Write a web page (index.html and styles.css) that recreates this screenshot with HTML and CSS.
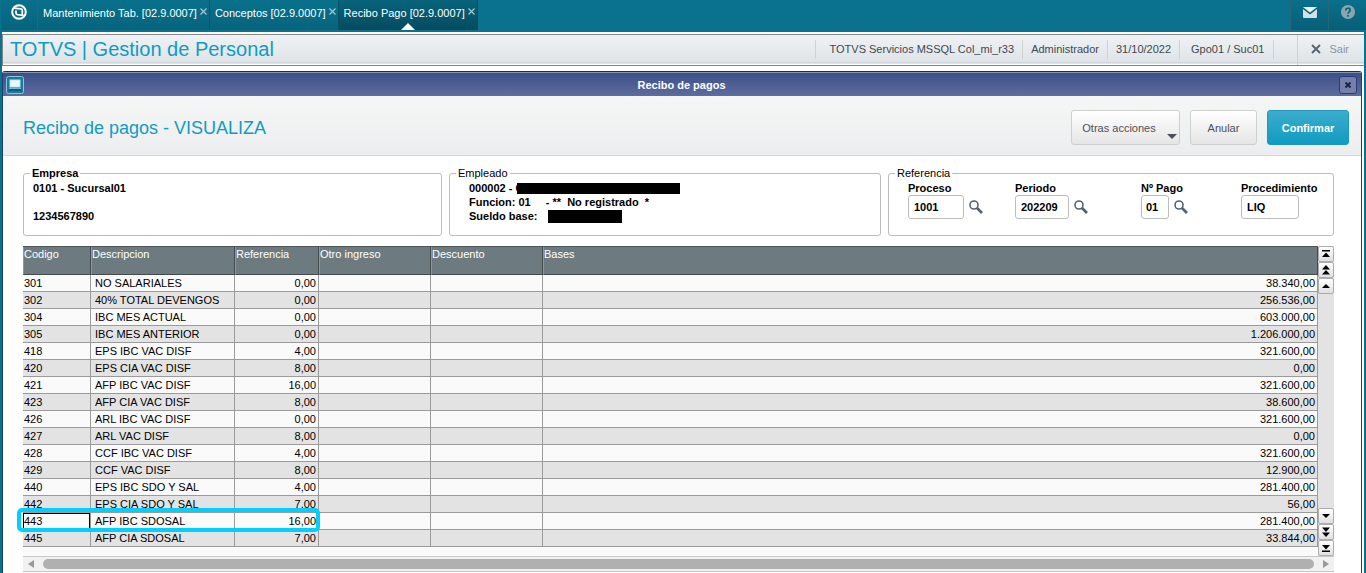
FILE: index.html
```html
<!DOCTYPE html>
<html lang="es">
<head>
<meta charset="utf-8">
<title>Recibo de pagos</title>
<link rel="stylesheet" href="styles.css">
</head>
<body>
<nav class="topbar">
  <button class="brand" aria-label="Inicio"><svg width="16" height="16" viewBox="0 0 16 16"><circle cx="8" cy="8" r="6.8" fill="none" stroke="#fff" stroke-width="2"/><path d="M3 4.200L9.800 4.800Q11.300 5 11.300 6.600V11.500" fill="none" stroke="#fff" stroke-width="1.800"/><path d="M5 6.500V9Q5 10.500 6.500 10.700L12.500 11.300" fill="none" stroke="#fff" stroke-width="1.800"/></svg></button>
  <div class="tab"><a href="#">Mantenimiento Tab. [02.9.0007]</a><button class="tab-close" aria-label="Cerrar Mantenimiento"><svg width="7" height="7" viewBox="0 0 7 7"><path d="M.5.5l6 6M6.500.500l-6 6"/></svg></button></div>
  <div class="tab"><a href="#">Conceptos [02.9.0007]</a><button class="tab-close" aria-label="Cerrar Conceptos"><svg width="7" height="7" viewBox="0 0 7 7"><path d="M.5.5l6 6M6.500.500l-6 6"/></svg></button></div>
  <div class="tab active"><a href="#">Recibo Pago [02.9.0007]</a><button class="tab-close" aria-label="Cerrar Recibo Pago"><svg width="7" height="7" viewBox="0 0 7 7"><path d="M.5.5l6 6M6.500.500l-6 6"/></svg></button></div>
  <div class="tools">
    <button class="tool" aria-label="Mensajes"><svg width="14" height="11" viewBox="0 0 14 11"><rect width="14" height="11" rx="1" fill="#d5e0e4"/><path d="M0 1l7 5.500L14 1" fill="none" stroke="#0a6078" stroke-width="1.500"/><path d="M1 0h12L7 4.800z" fill="#eef4f5"/></svg></button>
    <button class="tool" aria-label="Ayuda"><svg width="14" height="14" viewBox="0 0 14 14"><circle cx="7" cy="7" r="7" fill="#8ba5b0"/><path d="M4.800 5.500C4.800 2.500 9.300 2.500 9.200 5.300C9.200 6.800 7 6.900 7 8.800M7 10v1.700" fill="none" stroke="#07627a" stroke-width="1.700"/></svg></button>
  </div>
</nav>
<div class="page">
  <header class="infobar">
    <h1>TOTVS | Gestion de Personal</h1>
    <ul class="info">
      <li class="env">TOTVS Servicios MSSQL Col_mi_r33</li><li>Administrador</li><li>31/10/2022</li><li class="branch">Gpo01 / Suc01</li>
    </ul>
    <button class="exit"><svg width="10" height="10" viewBox="0 0 10 10"><path d="M1 1l8 8M9 1l-8 8" stroke="#596571" stroke-width="2"/></svg>Sair</button>
  </header>
  <main class="window">
    <div class="titlebar">
      <svg class="winicon" width="18" height="18" viewBox="0 0 18 18"><rect x=".5" y=".5" width="17" height="17" rx="2" fill="#137f9f" stroke="#8fc4d8"/><rect x="4" y="4" width="10" height="7" fill="#eef6f8" stroke="#bfe0ea"/><path d="M3 13h12l1 2H2z" fill="#0b5f7c"/><path d="M3 12.500h12" stroke="#6db8cf"/></svg>
      <span class="wintitle">Recibo de pagos</span>
      <button class="winclose" aria-label="Cerrar ventana"><svg width="6" height="6" viewBox="0 0 6 6"><path d="M.5.5l5 5M5.500.500l-5 5" stroke="#1c2548" stroke-width="2"/></svg></button>
    </div>
    <div class="heading">
      <h2>Recibo de pagos - VISUALIZA</h2>
      <div class="actions">
        <button class="btn more">Otras acciones<span class="caret"></span></button>
        <button class="btn cancel">Anular</button>
        <button class="btn primary">Confirmar</button>
      </div>
    </div>
    <div class="content">
      <div class="groups">
        <fieldset class="group company"><legend>Empresa</legend><p>0101 - Sucursal01</p><p class="tax">1234567890</p></fieldset>
        <fieldset class="group employee"><legend>Empleado</legend>
          <p>000002 - C<span class="mask name"></span></p>
          <p class="role"><span>Funcion: 01</span><span>- **&nbsp; No registrado&nbsp; *</span></p>
          <p>Sueldo base:<span class="mask pay"></span></p>
        </fieldset>
        <fieldset class="group reference"><legend>Referencia</legend>
          <div class="fields">
            <div><label for="proceso">Proceso</label><div class="entry"><input id="proceso" class="w56" value="1001"><button class="lookup" aria-label="Buscar proceso"><svg width="14" height="14" viewBox="0 0 14 14"><circle cx="5" cy="5" r="4"/><path d="M8 8l5 5" class="handle"/></svg></button></div></div>
            <div><label for="periodo">Periodo</label><div class="entry"><input id="periodo" class="w54" value="202209"><button class="lookup" aria-label="Buscar periodo"><svg width="14" height="14" viewBox="0 0 14 14"><circle cx="5" cy="5" r="4"/><path d="M8 8l5 5" class="handle"/></svg></button></div></div>
            <div><label for="pago">Nº Pago</label><div class="entry"><input id="pago" class="w28" value="01"><button class="lookup" aria-label="Buscar pago"><svg width="14" height="14" viewBox="0 0 14 14"><circle cx="5" cy="5" r="4"/><path d="M8 8l5 5" class="handle"/></svg></button></div></div>
            <div><label for="proc">Procedimiento</label><div class="entry"><input id="proc" class="w58" value="LIQ"></div></div>
          </div>
        </fieldset>
      </div>
      <div class="gridbox">
        <div class="gridmain">
          <table>
            <colgroup><col class="c1"><col class="c2"><col class="c3"><col class="c4"><col class="c4"><col></colgroup>
            <thead><tr><th>Codigo</th><th>Descripcion</th><th>Referencia</th><th>Otro ingreso</th><th>Descuento</th><th>Bases</th></tr></thead>
            <tbody>
              <tr><td>301</td><td>NO SALARIALES</td><td>0,00</td><td></td><td></td><td>38.340,00</td></tr>
              <tr><td>302</td><td>40% TOTAL DEVENGOS</td><td>0,00</td><td></td><td></td><td>256.536,00</td></tr>
              <tr><td>304</td><td>IBC MES ACTUAL</td><td>0,00</td><td></td><td></td><td>603.000,00</td></tr>
              <tr><td>305</td><td>IBC MES ANTERIOR</td><td>0,00</td><td></td><td></td><td>1.206.000,00</td></tr>
              <tr><td>418</td><td>EPS IBC VAC DISF</td><td>4,00</td><td></td><td></td><td>321.600,00</td></tr>
              <tr><td>420</td><td>EPS CIA VAC DISF</td><td>8,00</td><td></td><td></td><td>0,00</td></tr>
              <tr><td>421</td><td>AFP IBC VAC DISF</td><td>16,00</td><td></td><td></td><td>321.600,00</td></tr>
              <tr><td>423</td><td>AFP CIA VAC DISF</td><td>8,00</td><td></td><td></td><td>38.600,00</td></tr>
              <tr><td>426</td><td>ARL IBC VAC DISF</td><td>0,00</td><td></td><td></td><td>321.600,00</td></tr>
              <tr><td>427</td><td>ARL VAC DISF</td><td>8,00</td><td></td><td></td><td>0,00</td></tr>
              <tr><td>428</td><td>CCF IBC VAC DISF</td><td>4,00</td><td></td><td></td><td>321.600,00</td></tr>
              <tr><td>429</td><td>CCF VAC DISF</td><td>8,00</td><td></td><td></td><td>12.900,00</td></tr>
              <tr><td>440</td><td>EPS IBC SDO Y SAL</td><td>4,00</td><td></td><td></td><td>281.400,00</td></tr>
              <tr><td>442</td><td>EPS CIA SDO Y SAL</td><td>7,00</td><td></td><td></td><td>56,00</td></tr>
              <tr class="current"><td>443</td><td>AFP IBC SDOSAL</td><td>16,00</td><td></td><td></td><td>281.400,00</td></tr>
              <tr><td>445</td><td>AFP CIA SDOSAL</td><td>7,00</td><td></td><td></td><td>33.844,00</td></tr>
            </tbody>
          </table>
          <span class="marker"></span>
        </div>
        <div class="vscroll">
          <button aria-label="Primero"><svg width="10" height="10" viewBox="0 0 10 10"><path d="M1 1h8v1.500H1zM5 3.500L9 8H1z"/></svg></button>
          <button aria-label="Página anterior"><svg width="10" height="10" viewBox="0 0 10 10"><path d="M5 0l4 4.500H1zM5 5l4 4.500H1z"/></svg></button>
          <button aria-label="Anterior"><svg width="10" height="10" viewBox="0 0 10 10"><path d="M5 3l4 4H1z"/></svg></button>
          <span class="track"></span>
          <button aria-label="Siguiente"><svg width="10" height="10" viewBox="0 0 10 10"><path d="M5 7l4-4H1z"/></svg></button>
          <button aria-label="Página siguiente"><svg width="10" height="10" viewBox="0 0 10 10"><path d="M5 5l4-4.500H1zM5 10l4-4.500H1z"/></svg></button>
          <button aria-label="Último"><svg width="10" height="10" viewBox="0 0 10 10"><path d="M1 7.500h8V9H1zM5 6.500L9 2H1z"/></svg></button>
        </div>
      </div>
      <div class="hscroll">
        <button aria-label="Izquierda"><svg width="6" height="8" viewBox="0 0 6 8"><path d="M6 0v8L0 4z"/></svg></button>
        <span class="thumb"></span>
        <button aria-label="Derecha"><svg width="6" height="8" viewBox="0 0 6 8"><path d="M0 0v8l6-4z"/></svg></button>
      </div>
    </div>
  </main>
</div>
</body>
</html>
```
FILE: styles.css
```css
* { box-sizing: border-box; }
body {
  margin: 0;
  min-height: 100vh;
  display: flex;
  flex-direction: column;
  background: #0a728f;
  color: #000;
  font: 11px/14px "Liberation Sans", Arial, sans-serif;
}
button { font: inherit; color: inherit; border: 0; padding: 0; background: none; display: flex; align-items: center; justify-content: center; }
h1, h2, p, ul { margin: 0; padding: 0; }
h1, h2 { font-weight: normal; }
svg { flex: none; }

.topbar { display: flex; height: 32px; padding: 0 0 2px 1px; color: #fff; }
.brand { width: 37px; padding-bottom: 6px; background: linear-gradient(#09708b, #07647d); border-right: 1px solid #2c6577; }
.tab { position: relative; display: flex; align-items: center; gap: 3px; padding: 0 2px 5px 5px; background: linear-gradient(#09718c, #07647d); border-right: 1px solid #075066; }
.tab a { color: #fff; text-decoration: none; white-space: nowrap; }
.tab-close { padding-bottom: 2px; }
.tab-close path { stroke: #a6c9d3; stroke-width: 1.2; }
.tab.active { background: linear-gradient(#08647c, #064b5e); }
.tab.active::after { content: ""; position: absolute; left: 50%; bottom: 0; margin-left: -7px; border: 7px solid transparent; border-top: 0; border-bottom-color: #fff; }
.tools { display: flex; margin-left: auto; }
.tool { width: 38px; padding-bottom: 6px; background: linear-gradient(#09708b, #075f77); border-left: 1px solid #2c6577; }

.page { flex: 1; display: flex; flex-direction: column; margin: 0 2px; padding-top: 2px; background: #fff; }
.infobar { display: flex; align-items: stretch; height: 32px; padding-left: 7px; border: 1px solid #858585; border-width: 1px 0 1px 1px; background: linear-gradient(#eff2f4, #dfe4e8 27px, #c4c8cc 28px, #fff 29px); color: #434750; }
.infobar h1 { flex: 1; color: #0f9cc2; font-size: 20px; line-height: 28px; }
.info { display: flex; list-style: none; align-items: center; padding-bottom: 2px; }
.info li { padding: 2px 8px; border-left: 1px solid #cfd2d0; line-height: 15px; }
.info .env { padding-left: 14px; }
.info .branch { padding: 2px 9px 2px 11px; border-right: 1px solid #cfd2d0; }
.exit { margin-left: 23px; padding: 0 15px 2px 13px; gap: 8px; border-left: 1px solid #cfd2d0; color: #8f959c; }

.window { flex: 1; margin: 5px 2px 0 0; border: 1px solid #1c4170; border-width: 1px 1px 0; border-top-color: #26303d; border-radius: 3px 3px 0 0; background: #fff; }
.titlebar { display: flex; align-items: center; height: 24px; padding: 0 4px 0 3px; border-top: 1px solid #8795b5; background: linear-gradient(#3c5089, #5e6c9f); color: #fff; }
.wintitle { flex: 1; text-align: center; font-weight: bold; }
.winclose { width: 18px; height: 18px; border: 1px solid #293c72; border-radius: 3px; background: #7480aa; }
.heading { display: flex; justify-content: space-between; align-items: center; height: 60px; padding: 4px 12px 0 20px; border-bottom: 1px solid #d4d6d8; background: linear-gradient(#f5f7f6, #ecedef); }
.heading h2 { color: #0f9cc2; font-size: 18px; line-height: 22px; }
.actions { display: flex; gap: 10px; }
.btn { height: 35px; border: 1px solid #cfcfcf; border-radius: 3px; background: linear-gradient(#fff, #e5e5e5); color: #4d4f5a; }
.more { position: relative; width: 109px; padding-right: 13px; }
.caret { position: absolute; right: 2px; bottom: 5px; border: 5px solid transparent; border-top-color: #4b4f5c; border-bottom: 0; }
.cancel { width: 67px; }
.primary { width: 82px; border-color: #1b9abc; background: linear-gradient(#3caccc, #0f9cc2); color: #fff; font-weight: bold; }

.content { padding: 11px 27px 0 20px; }
.groups { display: grid; grid-template-columns: 419fr 432fr 446fr; gap: 7px; }
.group { min-width: 0; height: 69px; margin: 0; padding: 2px 9px 0; border: 1px solid #bdbdbd; border-radius: 3px; font-weight: bold; }
.group legend { margin-left: -3px; padding: 0 2px; line-height: 12px; font-weight: normal; }
.group.company legend { font-weight: bold; }
.tax { margin-top: 14px; }
.group.employee { padding-left: 19px; }
.group.employee legend { margin-left: -13px; }
.employee p { display: flex; align-items: center; height: 14px; }
.role { gap: 15px; }
.mask { background: #000; }
.name { width: 163px; height: 11px; margin-left: -6px; }
.pay { width: 74px; height: 13px; margin-left: 11px; }
.group.reference { padding: 2px 0 0 19px; }
.group.reference legend { margin-left: -13px; }
.fields { display: grid; grid-template-columns: 107fr 126fr 100fr 92fr; }
.fields label { display: block; }
.entry { display: flex; align-items: center; gap: 5px; }
.entry input { height: 24px; padding: 0 5px; border: 1px solid #bdbdbd; border-radius: 3px; background: #fff; color: #000; font: bold 11px/14px "Liberation Sans", Arial, sans-serif; }
.w56 { width: 56px; }
.w54 { width: 54px; }
.w28 { width: 28px; }
.entry .w28 { padding: 0 4px; }
.w58 { width: 58px; }
.lookup svg { fill: none; stroke: #56616f; stroke-width: 1.6; }
.lookup .handle { stroke-width: 2.6; }

.gridbox { display: flex; margin-top: 10px; height: 310px; background: #fafafa; }
.gridmain { position: relative; flex: 1; border-top: 1px solid #4d5759; }
table { width: 100%; table-layout: fixed; border-collapse: separate; border-spacing: 0; }
.c1 { width: 68px; }
.c2 { width: 144px; }
.c3 { width: 84px; }
.c4 { width: 112px; }
th { height: 28px; padding: 0; vertical-align: top; text-align: left; font-weight: normal; color: #fff; background: #6d7b80; border-right: 1px solid #434b4d; border-bottom: 1px solid #434b4d; border-left: 1px solid #8b989c; }
td { height: 17px; padding: 0 1px; line-height: 14px; border-right: 1px solid #9b9b9b; border-bottom: 1px solid #9b9b9b; }
td:nth-child(2) { padding-left: 4px; }
td:nth-child(n+3) { text-align: right; padding-right: 2px; }
tbody tr:nth-child(even) { background: #e3e3e3; }
.current td:first-child { box-shadow: inset 0 0 0 1px #000; }
.marker { position: absolute; left: -6px; top: 261px; width: 303px; height: 24px; border: 4px solid #00cfff; border-radius: 5px; }
.vscroll { display: flex; flex-direction: column; width: 16px; background: #e3e3e3; }
.vscroll button { height: 16px; border: 1px solid #adadad; border-radius: 2px; background: linear-gradient(#fff, #e0e0e0); }
.track { flex: 1; }
.hscroll { display: flex; align-items: center; height: 16px; padding: 0 5px; gap: 9px; border: solid #c8c8c8; border-width: 1px 0; background: #f1f1f1; }
.hscroll svg { fill: #999; }
.thumb { flex: 1; height: 10px; border-radius: 5px; background: #b0b0b0; }
```
